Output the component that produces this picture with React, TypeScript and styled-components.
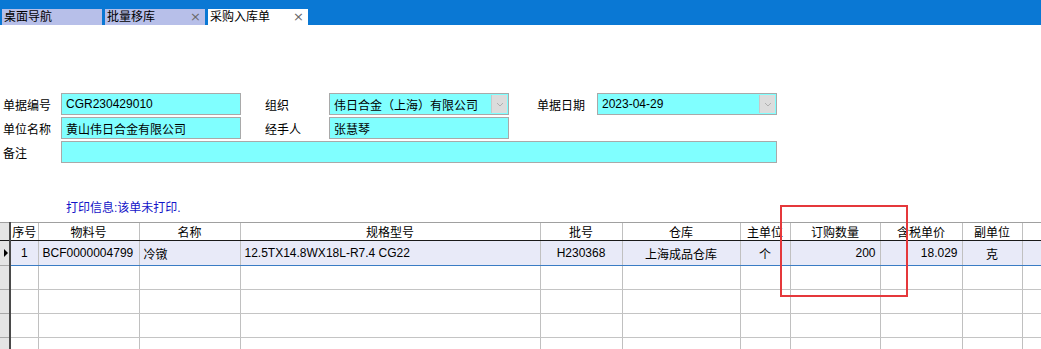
import styled, { createGlobalStyle } from "styled-components";

const GlobalStyle = createGlobalStyle`
  html, body {
    margin: 0;
    padding: 0;
    background: #ffffff;
    font-family: "Liberation Sans", "Noto Sans CJK SC", sans-serif;
    font-size: 12px;
    color: #000;
  }
  * {
    box-sizing: border-box;
  }
`;

const Page = styled.div`
  position: relative;
  width: 1041px;
  height: 349px;
  overflow: hidden;
`;

const TabBar = styled.div`
  display: flex;
  align-items: flex-end;
  gap: 3px;
  height: 25px;
  padding-left: 2px;
  background: #0a78d4;
`;

const Tab = styled.div<{ $active?: boolean }>`
  display: flex;
  align-items: center;
  justify-content: space-between;
  width: 100px;
  height: 16px;
  padding: 0 4px 0 2px;
  background: ${(p) => (p.$active ? "#ffffff" : "#b7bfe9")};
  font-size: 12px;
  line-height: 16px;
`;

const TabClose = styled.span`
  color: #6a6a6a;
  font-size: 13px;
  font-family: "DejaVu Sans", sans-serif;
  line-height: 16px;
`;

const Form = styled.div`
  display: flex;
  flex-direction: column;
  gap: 2px;
  padding: 68px 0 0 3px;
`;

const FormRow = styled.div`
  display: flex;
  align-items: center;
  height: 22px;
`;

const Label = styled.div<{ $w: number; $pad?: number }>`
  width: ${(p) => p.$w}px;
  padding-left: ${(p) => p.$pad ?? 0}px;
  font-size: 12px;
`;

const Field = styled.div<{ $w: number }>`
  position: relative;
  display: flex;
  align-items: center;
  width: ${(p) => p.$w}px;
  height: 22px;
  padding-left: 4px;
  background: #80ffff;
  border: 1px solid #a9a9a9;
  font-size: 12px;
  white-space: nowrap;
`;

const DropButton = styled.div`
  position: absolute;
  right: 1px;
  top: 1px;
  bottom: 1px;
  width: 16px;
  display: flex;
  align-items: center;
  justify-content: center;
  background: #dcdcdc;
  border-left: 1px solid #c8c8c8;
`;

const PrintInfo = styled.div`
  padding: 35px 0 0 66px;
  height: 59px;
  color: #1414c8;
  font-size: 12px;
`;

const Grid = styled.table`
  border-collapse: collapse;
  table-layout: fixed;
  width: 1041px;
  font-size: 12px;
`;

const HeadCell = styled.th`
  height: 18px;
  padding: 0;
  font-weight: normal;
  text-align: center;
  border-top: 1px solid #a0a0a0;
  border-left: 1px solid #c0c0c0;
  border-bottom: 1px solid #1a1a1a;
  background: #ffffff;
  white-space: nowrap;
  overflow: hidden;
`;

const Indicator = styled.td`
  padding: 0;
  background: #e4e4e4;
  border-bottom: 1px solid #a8a8a8;
  border-right: 2px solid #4a4a4a;
`;

const HeadIndicator = styled.th`
  padding: 0;
  background: #e4e4e4;
  border-top: 1px solid #a0a0a0;
  border-bottom: 1px solid #1a1a1a;
  border-right: 2px solid #4a4a4a;
`;

const Cell = styled.td<{ $align?: string; $filled?: boolean }>`
  height: 24px;
  padding: 0 4px;
  text-align: ${(p) => p.$align ?? "left"};
  border-left: 1px solid #c0c0c0;
  border-bottom: 1px solid ${(p) => (p.$filled ? "#3a7cc4" : "#c4c4c4")};
  background: ${(p) => (p.$filled ? "#e8eaf8" : "#ffffff")};
  white-space: nowrap;
  overflow: hidden;
`;

const Highlight = styled.div`
  position: absolute;
  left: 780px;
  top: 205px;
  width: 128px;
  height: 92px;
  border: 2px solid #e5383b;
  pointer-events: none;
`;

const columns = [
  { w: 10, title: "" },
  { w: 28, title: "序号" },
  { w: 101, title: "物料号" },
  { w: 101, title: "名称" },
  { w: 300, title: "规格型号" },
  { w: 82, title: "批号" },
  { w: 118, title: "仓库" },
  { w: 50, title: "主单位" },
  { w: 90, title: "订购数量" },
  { w: 82, title: "含税单价" },
  { w: 60, title: "副单位" },
  { w: 19, title: "" },
];

const row = [
  { v: "1", a: "center" },
  { v: "BCF0000004799", a: "left" },
  { v: "冷镦", a: "left" },
  { v: "12.5TX14.8WX18L-R7.4 CG22", a: "left" },
  { v: "H230368", a: "center" },
  { v: "上海成品仓库", a: "center" },
  { v: "个", a: "center" },
  { v: "200", a: "right" },
  { v: "18.029", a: "right" },
  { v: "克", a: "center" },
  { v: "", a: "left" },
];

function Chevron() {
  return (
    <svg width="8" height="5" viewBox="0 0 8 5">
      <path d="M1 1 L4 4 L7 1" fill="none" stroke="#b0b0b0" strokeWidth="1" />
    </svg>
  );
}

function RowArrow() {
  return (
    <svg width="10" height="24" viewBox="0 0 10 24" style={{ display: "block" }}>
      <path d="M4 8 L8 12 L4 16 Z" fill="#000" />
    </svg>
  );
}

export default function App() {
  return (
    <Page>
      <GlobalStyle />
      <TabBar>
        <Tab>桌面导航</Tab>
        <Tab>
          批量移库<TabClose>×</TabClose>
        </Tab>
        <Tab $active>
          采购入库单<TabClose>×</TabClose>
        </Tab>
      </TabBar>

      <Form>
        <FormRow>
          <Label $w={58}>单据编号</Label>
          <Field $w={180}>CGR230429010</Field>
          <Label $w={88} $pad={24}>组织</Label>
          <Field $w={180}>
            伟日合金（上海）有限公司
            <DropButton>
              <Chevron />
            </DropButton>
          </Field>
          <Label $w={88} $pad={28}>单据日期</Label>
          <Field $w={180}>
            2023-04-29
            <DropButton>
              <Chevron />
            </DropButton>
          </Field>
        </FormRow>
        <FormRow>
          <Label $w={58}>单位名称</Label>
          <Field $w={180}>黄山伟日合金有限公司</Field>
          <Label $w={88} $pad={24}>经手人</Label>
          <Field $w={180}>张慧琴</Field>
        </FormRow>
        <FormRow>
          <Label $w={58}>备注</Label>
          <Field $w={716} />
        </FormRow>
      </Form>

      <PrintInfo>打印信息:该单未打印.</PrintInfo>

      <Grid>
        <colgroup>
          {columns.map((c, i) => (
            <col key={i} style={{ width: c.w }} />
          ))}
        </colgroup>
        <thead>
          <tr>
            <HeadIndicator />
            {columns.slice(1).map((c, i) => (
              <HeadCell key={i}>{c.title}</HeadCell>
            ))}
          </tr>
        </thead>
        <tbody>
          <tr>
            <Indicator>
              <RowArrow />
            </Indicator>
            {row.map((c, i) => (
              <Cell key={i} $align={c.a} $filled>
                {c.v}
              </Cell>
            ))}
          </tr>
          {[0, 1, 2, 3].map((r) => (
            <tr key={r}>
              <Indicator />
              {row.map((_, i) => (
                <Cell key={i} />
              ))}
            </tr>
          ))}
        </tbody>
      </Grid>

      <Highlight />
    </Page>
  );
}
